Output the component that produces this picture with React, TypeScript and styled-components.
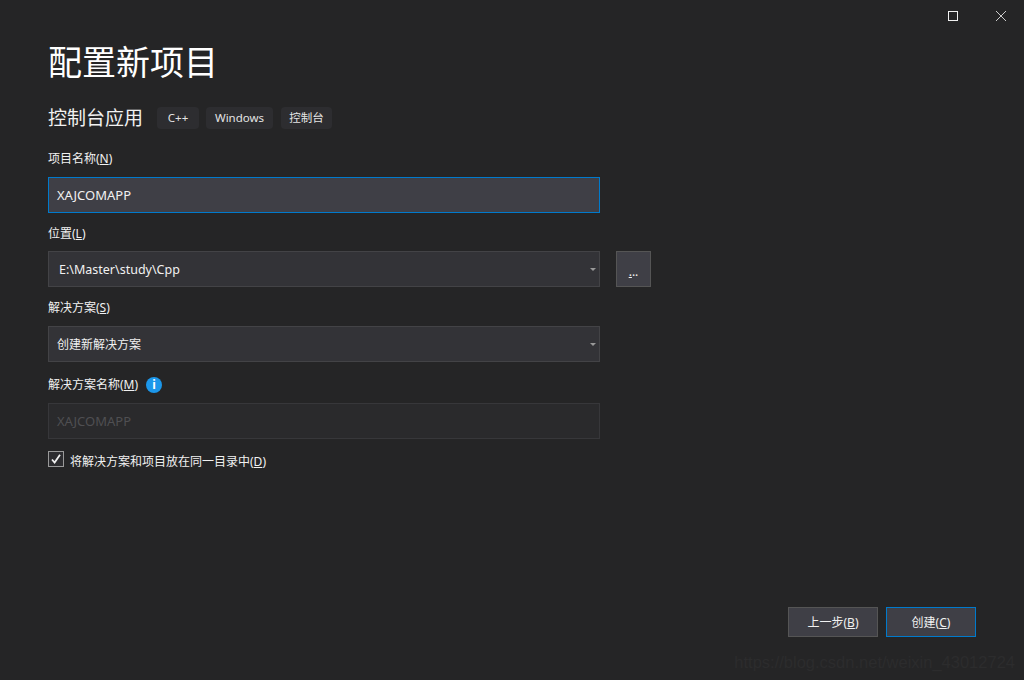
import styled, { createGlobalStyle } from "styled-components";

const GlobalStyle = createGlobalStyle`
  html, body {
    margin: 0;
    padding: 0;
    background: #252526;
  }
  * {
    box-sizing: border-box;
  }
`;

const Page = styled.div`
  position: relative;
  width: 1024px;
  height: 680px;
  overflow: hidden;
  background: #252526;
  color: #f1f1f1;
  font-family: "Noto Sans", "Noto Sans CJK SC", sans-serif;
  font-size: 12px;
  display: flex;
  flex-direction: column;
`;

const TitleBar = styled.div`
  height: 32px;
  padding: 11px 18px 0 0;
  display: flex;
  justify-content: flex-end;
  align-items: flex-start;
  gap: 38px;
`;

const Content = styled.div`
  flex: 1;
  padding: 6px 0 0 48px;
  display: flex;
  flex-direction: column;
`;

const Title = styled.h1`
  margin: 0;
  height: 48px;
  font-size: 34px;
  line-height: 48px;
  font-weight: 400;
  color: #ffffff;
`;

const SubRow = styled.div`
  margin-top: 21px;
  height: 22px;
  display: flex;
  align-items: center;
`;

const Subtitle = styled.div`
  width: 109px;
  font-size: 19px;
  line-height: 22px;
  color: #f1f1f1;
`;

const Tag = styled.span<{ $width: number; $gap?: number }>`
  width: ${(p) => p.$width}px;
  height: 22px;
  padding-bottom: 2px;
  margin-right: ${(p) => p.$gap ?? 7}px;
  border-radius: 4px;
  background: #2d2d30;
  display: flex;
  align-items: center;
  justify-content: center;
  font-size: 11.5px;
  color: #e4e4e4;
`;

const Label = styled.label<{ $top: number; $bottom: number }>`
  margin-top: ${(p) => p.$top}px;
  margin-bottom: ${(p) => p.$bottom}px;
  height: 18px;
  line-height: 18px;
  font-size: 12px;
  color: #f1f1f1;
  display: flex;
  align-items: center;
  u {
    text-underline-offset: 1px;
  }
`;

const Field = styled.div<{ $focus?: boolean; $disabled?: boolean }>`
  width: 552px;
  height: 36px;
  padding: 0 3px 0 8px;
  display: flex;
  align-items: center;
  justify-content: space-between;
  color: ${(p) => (p.$disabled ? "#4f4f52" : "#f1f1f1")};
  background: ${(p) =>
    p.$focus ? "#3f3f46" : p.$disabled ? "#2a2a2c" : "#333337"};
  border: 1px solid
    ${(p) => (p.$focus ? "#007acc" : p.$disabled ? "#37373a" : "#434346")};
`;

const Value = styled.span<{ $size: number; $indent?: number }>`
  font-size: ${(p) => p.$size}px;
  margin-left: ${(p) => p.$indent ?? 0}px;
`;

const FieldRow = styled.div`
  display: flex;
  gap: 16px;
`;

const Caret = styled.span`
  width: 0;
  height: 0;
  border-left: 3.5px solid transparent;
  border-right: 3.5px solid transparent;
  border-top: 3.5px solid #999999;
`;

const BrowseButton = styled.div`
  width: 35px;
  height: 36px;
  padding-top: 4px;
  background: #3f3f46;
  border: 1px solid #555555;
  display: flex;
  align-items: center;
  justify-content: center;
  font-size: 12px;
  color: #f1f1f1;
  u {
    text-underline-offset: 1px;
  }
`;

const InfoIcon = styled.span`
  width: 16px;
  height: 16px;
  margin-left: 8px;
  border-radius: 50%;
  background: #1c97ea;
  color: #ffffff;
  display: flex;
  align-items: center;
  justify-content: center;
  font-size: 12px;
  font-weight: 700;
`;

const CheckRow = styled.div`
  margin-top: 11px;
  height: 18px;
  display: flex;
  align-items: center;
  gap: 6px;
  font-size: 12px;
  color: #f1f1f1;
  u {
    text-underline-offset: 1px;
  }
`;

const CheckText = styled.span`
  padding-top: 4px;
`;

const Box = styled.span`
  width: 16px;
  height: 16px;
  background: #2d2d30;
  border: 1px solid #999999;
  display: flex;
  align-items: center;
  justify-content: center;
`;

const Footer = styled.div`
  height: 73px;
  padding: 0 48px 43px 0;
  display: flex;
  justify-content: flex-end;
  align-items: flex-end;
  gap: 8px;
`;

const Button = styled.div<{ $primary?: boolean }>`
  width: 90px;
  height: 30px;
  background: #3f3f46;
  border: 1px solid ${(p) => (p.$primary ? "#007acc" : "#555555")};
  display: flex;
  align-items: center;
  justify-content: center;
  font-size: 12px;
  color: #f1f1f1;
  u {
    text-underline-offset: 1px;
  }
`;

const Watermark = styled.div`
  position: absolute;
  right: 9px;
  bottom: 9px;
  font-family: "Liberation Sans", sans-serif;
  font-size: 16.5px;
  line-height: 18px;
  color: #2c2c2d;
  white-space: nowrap;
`;

export default function App() {
  return (
    <Page>
      <GlobalStyle />
      <TitleBar>
        <svg width="10" height="10" viewBox="0 0 10 10">
          <rect x="0.5" y="0.5" width="9" height="9" fill="none" stroke="#f1f1f1" />
        </svg>
        <svg width="10" height="10" viewBox="0 0 10 10">
          <path d="M0 0 L10 10 M10 0 L0 10" stroke="#cccccc" fill="none" />
        </svg>
      </TitleBar>
      <Content>
        <Title>配置新项目</Title>
        <SubRow>
          <Subtitle>控制台应用</Subtitle>
          <Tag $width={42}>C++</Tag>
          <Tag $width={67} $gap={8}>Windows</Tag>
          <Tag $width={51}>控制台</Tag>
        </SubRow>

        <Label $top={21} $bottom={9}>
          项目名称(<u>N</u>)
        </Label>
        <Field $focus>
          <Value $size={13}>XAJCOMAPP</Value>
        </Field>

        <Label $top={12} $bottom={8}>
          位置(<u>L</u>)
        </Label>
        <FieldRow>
          <Field>
            <Value $size={12.5} $indent={2}>E:\Master\study\Cpp</Value>
            <Caret />
          </Field>
          <BrowseButton>
            <u>.</u>..
          </BrowseButton>
        </FieldRow>

        <Label $top={12} $bottom={9}>
          解决方案(<u>S</u>)
        </Label>
        <Field>
          <Value $size={12}>创建新解决方案</Value>
          <Caret />
        </Field>

        <Label $top={14} $bottom={9}>
          解决方案名称(<u>M</u>)
          <InfoIcon>i</InfoIcon>
        </Label>
        <Field $disabled>
          <Value $size={13}>XAJCOMAPP</Value>
        </Field>

        <CheckRow>
          <Box>
            <svg width="12" height="12" viewBox="0 0 12 12">
              <path d="M2 6.5 L4.6 9.5 L10 1.8" stroke="#f1f1f1" strokeWidth="1.8" fill="none" />
            </svg>
          </Box>
          <CheckText>
            将解决方案和项目放在同一目录中(<u>D</u>)
          </CheckText>
        </CheckRow>
      </Content>
      <Footer>
        <Button>
          上一步(<u>B</u>)
        </Button>
        <Button $primary>
          创建(<u>C</u>)
        </Button>
      </Footer>
      <Watermark>https://blog.csdn.net/weixin_43012724</Watermark>
    </Page>
  );
}
